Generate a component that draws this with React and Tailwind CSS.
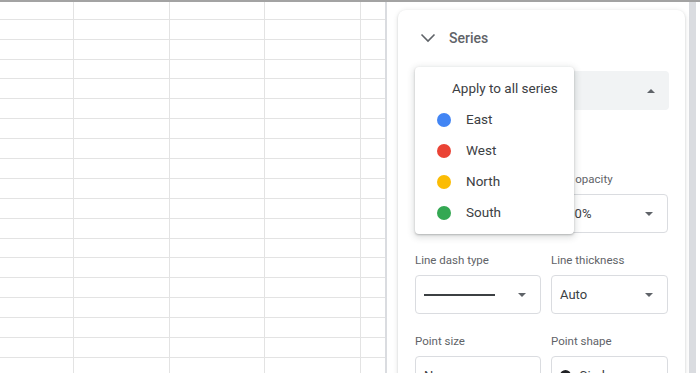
import React from 'react';

const rowHeights = [18, 20, 20, 19, 20, 20, 20, 20, 20, 20, 20, 20, 19, 20, 20, 20, 20, 20, 20];
const colWidths = ['w-[74px]', 'w-[96px]', 'w-[95px]', 'w-[96px]', 'w-[24px]'];

const series = [
  { name: 'East', color: 'bg-[#4285f4]' },
  { name: 'West', color: 'bg-[#ea4335]' },
  { name: 'North', color: 'bg-[#fbbc04]' },
  { name: 'South', color: 'bg-[#34a853]' },
];

const Caret = ({ up }) => (
  <div
    className={
      up
        ? 'w-0 h-0 border-x-[4px] border-x-transparent border-b-[4px] border-b-[#5f6368]'
        : 'w-0 h-0 border-x-[4px] border-x-transparent border-t-[4px] border-t-[#5f6368]'
    }
  />
);

const Field = ({ children }) => (
  <div className="h-[39px] flex items-center justify-between pl-2 pr-[14px] border border-[#dadce0] rounded-[4px] bg-white">
    <div className="flex items-center text-[13px] text-[#3c4043]">{children}</div>
    <Caret />
  </div>
);

const Label = ({ children }) => (
  <div className="h-4 leading-4 text-[11.5px] text-[#5f6368] mb-[7px]">{children}</div>
);

export default function App() {
  return (
    <div className="w-[700px] h-[373px] overflow-hidden bg-white border-t-2 border-[#a3a3a3] flex font-['Roboto',sans-serif]">
      {/* sheet grid */}
      <div className="w-[385px] shrink-0">
        {rowHeights.map((h, i) => (
          <div key={i} className="flex" style={{ height: h }}>
            {colWidths.map((w, j) => (
              <div
                key={j}
                className={`${w} h-full border-b border-[#e3e3e3] ${j < 4 ? 'border-r' : ''}`}
              />
            ))}
          </div>
        ))}
      </div>

      {/* chart editor panel */}
      <div className="flex-1 flex border-l-2 border-[#dadce0] bg-white">
        <div className="flex-1 pl-[11px] pr-[4px] pt-[8px]">
          <div className="relative h-[400px] bg-white rounded-lg shadow-[0_1px_2px_rgba(60,64,67,0.2),0_1px_4px_1px_rgba(60,64,67,0.1)] pl-[17px] pr-[16px]">
            <div className="h-[56px] flex items-center">
              <svg width="16" height="10" viewBox="0 0 16 10" className="ml-[5px]">
                <path d="M1.5 1.5 L8 8 L14.5 1.5" fill="none" stroke="#5f6368" strokeWidth="1.6" />
              </svg>
              <span className="ml-[13px] text-[14px] font-medium text-[#5f6368]">Series</span>
            </div>

            <div className="mt-[5px] h-[39px] bg-[#f1f3f4] rounded-[4px] flex items-center justify-end pr-[14px]">
              <Caret up />
            </div>

            <div className="mt-[61px] grid grid-cols-[126px_117px] gap-x-[10px]">
              <div>
                <Label>Line color</Label>
                <Field>Auto</Field>
              </div>
              <div>
                <Label>Line opacity</Label>
                <Field>100%</Field>
              </div>
            </div>

            <div className="mt-[19px] grid grid-cols-[126px_117px] gap-x-[10px]">
              <div>
                <Label>Line dash type</Label>
                <Field>
                  <div className="w-[71px] h-[2px] bg-[#3c4043]" />
                </Field>
              </div>
              <div>
                <Label>Line thickness</Label>
                <Field>Auto</Field>
              </div>
            </div>

            <div className="mt-[19px] grid grid-cols-[126px_117px] gap-x-[10px]">
              <div>
                <Label>Point size</Label>
                <Field>None</Field>
              </div>
              <div>
                <Label>Point shape</Label>
                <Field>
                  <span className="w-[11px] h-[11px] rounded-full bg-[#202124] mr-[8px]" />
                  Circle
                </Field>
              </div>
            </div>

            {/* series dropdown menu */}
            <div className="absolute left-[17px] top-[57px] w-[159px] py-[6px] bg-white rounded-[4px] shadow-[0_2px_6px_2px_rgba(60,64,67,0.15),0_1px_2px_rgba(60,64,67,0.3)]">
              <div className="h-[31px] flex items-center pl-[37px] text-[13.5px] text-[#3c4043]">Apply to all series</div>
              {series.map((s) => (
                <div key={s.name} className="h-[31px] flex items-center pl-[22px] text-[13.5px] text-[#3c4043]">
                  <span className={`w-[14px] h-[14px] rounded-full ${s.color}`} />
                  <span className="ml-[15px]">{s.name}</span>
                </div>
              ))}
            </div>
          </div>
        </div>
        <div className="w-[7px] bg-[#dadce0]" />
        <div className="w-[4px] bg-white" />
      </div>
    </div>
  );
}
